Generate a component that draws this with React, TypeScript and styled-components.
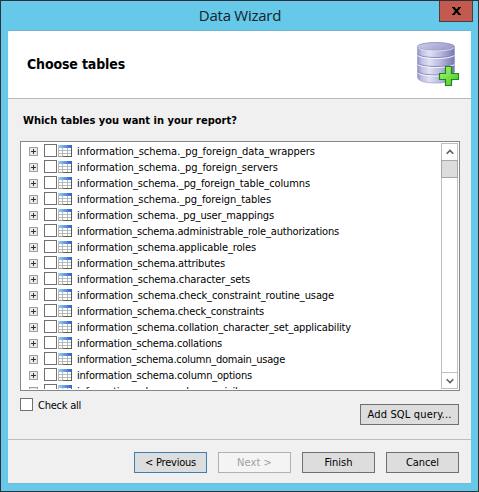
import React from "react";
import styled, { createGlobalStyle } from "styled-components";

const GlobalStyle = createGlobalStyle`
  * { box-sizing: border-box; }
  body { margin: 0; overflow: hidden; }
`;

const Window = styled.div`
  width: 479px;
  height: 492px;
  display: flex;
  flex-direction: column;
  padding: 0 7px 7px;
  background: #66c9e9;
  border: 1px solid #303039;
  font-family: "DejaVu Sans Condensed", "Noto Sans", sans-serif;
  font-size: 11px;
  color: #000;
`;

const TitleBar = styled.header`
  position: relative;
  height: 29px;
  flex: none;
  display: flex;
  justify-content: center;
  align-items: center;
  font: 15px "Open Sans", "Noto Sans", sans-serif;
  color: #14222a;
`;

const TitleText = styled.span`
  letter-spacing: -0.25px;
  padding: 0 0 1px 1px;
`;

const CloseButton = styled.button`
  position: absolute;
  top: 0;
  right: -2px;
  width: 34px;
  height: 21px;
  display: flex;
  align-items: flex-start;
  justify-content: center;
  padding: 6px 0 0;
  border: 1px solid #53383c;
  border-top: 0;
  background: #c35a50;
`;

const Client = styled.main`
  flex: 1;
  min-height: 0;
  display: flex;
  flex-direction: column;
  border-top: 1px solid #75b4d0;
  border-bottom: 1px solid #82b6ca;
  background: #f0f0f0;
`;

const Banner = styled.section`
  height: 68px;
  flex: none;
  display: flex;
  justify-content: space-between;
  background: #fff;
  border-bottom: 1px solid #b8b8b8;
  padding: 11px 12px 0 19px;
`;

const Heading = styled.h1<{ $size: number }>`
  margin: 0;
  font-size: ${(p) => p.$size}px;
  line-height: 18px;
  font-weight: bold;
  white-space: nowrap;
`;

const BannerTitle = styled(Heading)`
  margin-top: 13px;
`;

const Body = styled.section`
  height: 340px;
  flex: none;
  display: flex;
  flex-direction: column;
  padding: 13px 11px 0 12px;
`;

const Question = styled(Heading)`
  margin: 0 0 11px 3px;
`;

const ListBox = styled.div`
  height: 250px;
  flex: none;
  display: flex;
  padding: 1px;
  border: 1px solid #828790;
  background: #fff;
`;

const Rows = styled.ul`
  flex: 1;
  height: 246px;
  margin: 0;
  padding: 0 0 0 7px;
  list-style: none;
  overflow: hidden;
`;

const Row = styled.li`
  height: 16px;
  display: flex;
  align-items: flex-start;
  svg { flex: none; }
`;

const Expander = styled.svg`
  margin: 4px 6px 0 0;
`;

const TableGlyph = styled.svg`
  margin: 2px 5px 0 1px;
`;

const CheckBox = styled.span`
  width: 13px;
  height: 13px;
  flex: none;
  margin-top: 1px;
  border: 1px solid #707070;
  background: #fff;
`;

const Label = styled.span<{ $spacing?: number }>`
  line-height: 18px;
  letter-spacing: ${(p) => p.$spacing ?? 0}px;
  white-space: nowrap;
`;

const ScrollBar = styled.div`
  width: 17px;
  display: flex;
  flex-direction: column;
  border: 1px solid #bfbfbf;
`;

const ScrollButton = styled.div<{ $last?: boolean }>`
  height: 16px;
  flex: none;
  display: grid;
  place-items: center;
  margin-top: ${(p) => (p.$last ? "auto" : 0)};
  border-top: ${(p) => (p.$last ? "1px solid #bfbfbf" : "0")};
`;

const Thumb = styled.div`
  height: 18px;
  flex: none;
  margin: 0 -1px;
  border: 1px solid #a6a6a6;
  background: #dcdcdc;
`;

const Below = styled.div`
  display: flex;
  justify-content: space-between;
  padding: 6px 1px 0 0;
`;

const CheckAll = styled.label`
  display: flex;
  align-items: flex-start;
  gap: 5px;
`;

const Button = styled.button<{ $w: number; $tone?: "default" | "disabled" }>`
  width: ${(p) => p.$w}px;
  height: 21px;
  display: flex;
  align-items: flex-start;
  justify-content: center;
  padding: 1px 0 0;
  font: inherit;
  border: 1px solid
    ${(p) => (p.$tone === "default" ? "#3c7fb1" : p.$tone === "disabled" ? "#adb2b5" : "#707070")};
  background: ${(p) => (p.$tone === "disabled" ? "#f4f4f4" : "#dddddd")};
  color: ${(p) => (p.$tone === "disabled" ? "#a0a0a0" : "#000")};
`;

const AddButton = styled(Button)`
  margin-top: 7px;
`;

const Footer = styled.footer`
  flex: 1;
  display: flex;
  justify-content: flex-end;
  gap: 11px;
  padding: 12px 12px 0 0;
  border-top: 1px solid #bdbdbd;
`;

const tables: [string, number][] = [
  ["_pg_foreign_data_wrappers", 238],
  ["_pg_foreign_servers", 201],
  ["_pg_foreign_table_columns", 233],
  ["_pg_foreign_tables", 194],
  ["_pg_user_mappings", 197],
  ["administrable_role_authorizations", 262],
  ["applicable_roles", 179],
  ["attributes", 148],
  ["character_sets", 173],
  ["check_constraint_routine_usage", 257],
  ["check_constraints", 187],
  ["collation_character_set_applicability", 274],
  ["collations", 145],
  ["column_domain_usage", 208],
  ["column_options", 175],
  ["column_privileges", 183],
];

/* Spreads the glyphs of a row so that it takes the column width it is given. */
function FittedLabel({ text, width }: { text: string; width: number }) {
  const ref = React.useRef<HTMLSpanElement>(null);
  const [spacing, setSpacing] = React.useState(0);
  React.useLayoutEffect(() => {
    if (ref.current) {
      setSpacing((width - ref.current.getBoundingClientRect().width) / text.length);
    }
  }, [text, width]);
  return <Label ref={ref} $spacing={spacing}>{text}</Label>;
}

const Plus = () => (
  <Expander width="9" height="9" shapeRendering="crispEdges">
    <rect x=".5" y=".5" width="8" height="8" fill="#e9e9e9" stroke="#a0a0a0" />
    <path d="M2 4.5h5M4.5 2v5" stroke="#333" />
  </Expander>
);

const TableIcon = () => (
  <TableGlyph width="14" height="12">
    <defs>
      <linearGradient id="tableHead">
        <stop stopColor="#a9ccf6" />
        <stop offset="1" stopColor="#2c60cb" />
      </linearGradient>
    </defs>
    <g shapeRendering="crispEdges">
      <path d="M0 0h14v12H0z" fill="#fff" />
      <path d="M.5 3v9M4.500 3v9M9.500 3v9M0 5.500h13M0 8.500h13" stroke="#b8b8b8" />
      <path d="M13.500 3v9M5 11.500h9" stroke="#5c5c5c" />
      <path d="M0 11.500h5" stroke="#a0a0a0" />
    </g>
    <rect width="14" height="3" fill="url(#tableHead)" />
  </TableGlyph>
);

const DatabaseIcon = () => (
  <svg width="43" height="45" viewBox="0 0 43 45">
    <defs>
      <linearGradient id="drum">
        <stop stopColor="#9293c5" />
        <stop offset=".12" stopColor="#c0c1e3" />
        <stop offset=".32" stopColor="#e0e0f4" />
        <stop offset=".65" stopColor="#b3b4dc" />
        <stop offset="1" stopColor="#7778ad" />
      </linearGradient>
      <linearGradient id="lid" x2="1" y2=".4">
        <stop stopColor="#cfd0ea" />
        <stop offset="1" stopColor="#9c9dcf" />
      </linearGradient>
      <linearGradient id="add" x2="1" y2="1">
        <stop stopColor="#b2f47e" />
        <stop offset="1" stopColor="#45c91c" />
      </linearGradient>
    </defs>
    <path d="M1.500 5v30c0 4 8 6 18.500 6s18.500-2 18.500-6V5z" fill="url(#drum)" stroke="#9c9dc8" strokeWidth=".7" />
    <path d="M1.500 12.200c4 4.400 33 4.400 37 0M1.500 21.200c4 4.400 33 4.400 37 0M1.500 29.700c4 4.400 33 4.400 37 0" fill="none" stroke="#7f80b4" strokeWidth=".9" />
    <path d="M1.500 13.200c4 4.400 33 4.400 37 0M1.500 22.200c4 4.400 33 4.400 37 0M1.500 30.700c4 4.400 33 4.400 37 0" fill="none" stroke="#f4f4ff" strokeWidth="1" />
    <ellipse cx="20" cy="4.500" rx="18.500" ry="4" fill="url(#lid)" stroke="#8a8bb8" strokeWidth=".8" />
    <path d="M2 5.500c3 4.500 33 4.500 36 0" fill="none" stroke="#ededfb" strokeWidth=".8" />
    <path d="M29.500 24.500h6v7h7v6h-7v6h-6v-6h-6v-6h6z" fill="url(#add)" stroke="#168d16" strokeWidth="1.200" />
  </svg>
);

export default function App() {
  return (
    <>
      <GlobalStyle />
      <Window>
        <TitleBar>
          <TitleText>Data Wizard</TitleText>
          <CloseButton aria-label="Close">
            <svg width="9" height="8" viewBox="0 0 9 8">
              <path d="M1.500 .5l6 7M7.500 .5l-6 7" stroke="#000" strokeWidth="2.100" />
              <path d="M0 .5h3M6 .5h3M0 7.500h3M6 7.500h3" stroke="#000" />
            </svg>
          </CloseButton>
        </TitleBar>
        <Client>
          <Banner>
            <BannerTitle $size={14}><FittedLabel text="Choose tables" width={98} /></BannerTitle>
            <DatabaseIcon />
          </Banner>
          <Body>
            <Question as="h2" $size={11}><FittedLabel text="Which tables you want in your report?" width={214} /></Question>
            <ListBox>
              <Rows>
                {tables.map(([name, width]) => (
                  <Row key={name}>
                    <Plus />
                    <CheckBox />
                    <TableIcon />
                    <FittedLabel text={`information_schema.${name}`} width={width} />
                  </Row>
                ))}
              </Rows>
              <ScrollBar>
                <ScrollButton>
                  <svg width="8" height="6"><path d="M.7 4.800L4 1.500l3.300 3.300" fill="none" stroke="#606060" strokeWidth="1.600" /></svg>
                </ScrollButton>
                <Thumb />
                <ScrollButton $last>
                  <svg width="8" height="6"><path d="M.7 1.200L4 4.500l3.300-3.300" fill="none" stroke="#606060" strokeWidth="1.600" /></svg>
                </ScrollButton>
              </ScrollBar>
            </ListBox>
            <Below>
              <CheckAll><CheckBox /><FittedLabel text="Check all" width={43} /></CheckAll>
              <AddButton $w={99}><FittedLabel text="Add SQL query..." width={84} /></AddButton>
            </Below>
          </Body>
          <Footer>
            <Button $w={73} $tone="default"><FittedLabel text="&lt; Previous" width={51} /></Button>
            <Button $w={73} $tone="disabled" disabled><FittedLabel text="Next &gt;" width={35} /></Button>
            <Button $w={73}><FittedLabel text="Finish" width={28} /></Button>
            <Button $w={73}><FittedLabel text="Cancel" width={33} /></Button>
          </Footer>
        </Client>
      </Window>
    </>
  );
}
